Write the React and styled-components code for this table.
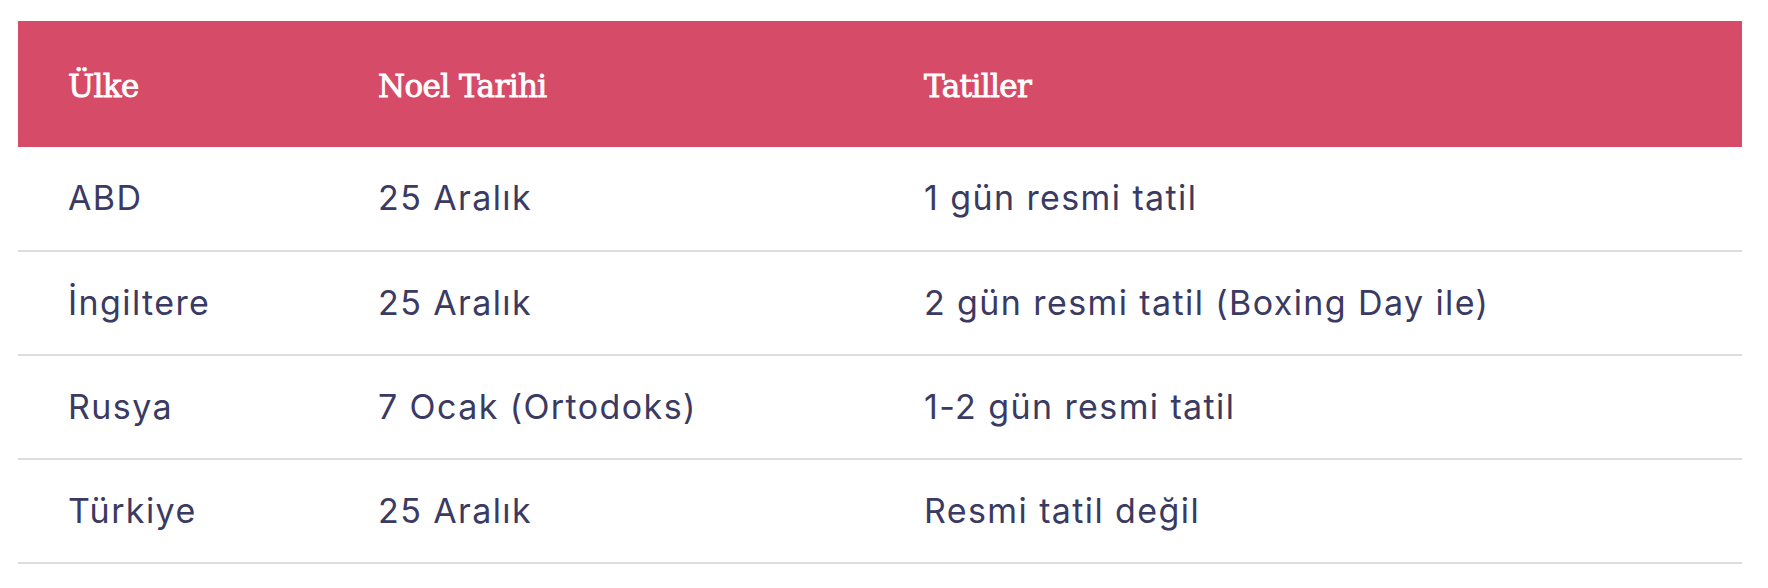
import React from "react";
import styled, { createGlobalStyle } from "styled-components";

const GlobalStyle = createGlobalStyle`
  html, body {
    margin: 0;
    padding: 0;
    background: #ffffff;
  }
  body {
    padding: 21px 26px 0 18px;
  }
`;

const Table = styled.table`
  width: 100%;
  border-collapse: collapse;
  table-layout: fixed;
`;

const HeadRow = styled.tr`
  background: #d64b67;
  height: 126px;
`;

// widths are content widths; the 50px left padding comes on top
const HeadCell = styled.th`
  width: ${(p) => (p.width ? `${p.width}px` : "auto")};
  padding: 4px 0 0 50px;
  text-align: left;
  font-family: "DejaVu Serif", "Liberation Serif", serif;
  font-weight: 400;
  font-size: 31px;
  letter-spacing: -0.6px;
  -webkit-text-stroke: 0.9px #ffffff;
  color: #ffffff;
`;

const Row = styled.tr`
  height: 104px;
  border-bottom: 2px solid #dddddd;
`;

const Cell = styled.td`
  padding: 0 0 2px 50px;
  font-family: Inter, "Noto Sans", sans-serif;
  font-size: 34px;
  letter-spacing: 1.4px;
  font-weight: 400;
  color: #3a3a62;
  white-space: nowrap;
`;

const rows = [
  ["ABD", "25 Aralık", "1 gün resmi tatil"],
  ["İngiltere", "25 Aralık", "2 gün resmi tatil (Boxing Day ile)"],
  ["Rusya", "7 Ocak (Ortodoks)", "1-2 gün resmi tatil"],
  ["Türkiye", "25 Aralık", "Resmi tatil değil"],
];

const App = () => {
  return (
    <>
      <GlobalStyle />
      <Table>
        <thead>
          <HeadRow>
            <HeadCell width={260}>Ülke</HeadCell>
            <HeadCell width={496}>Noel Tarihi</HeadCell>
            <HeadCell>Tatiller</HeadCell>
          </HeadRow>
        </thead>
        <tbody>
          {rows.map((r) => (
            <Row key={r[0]}>
              {r.map((c, i) => (
                <Cell key={i}>{c}</Cell>
              ))}
            </Row>
          ))}
        </tbody>
      </Table>
    </>
  );
};

export default App;
